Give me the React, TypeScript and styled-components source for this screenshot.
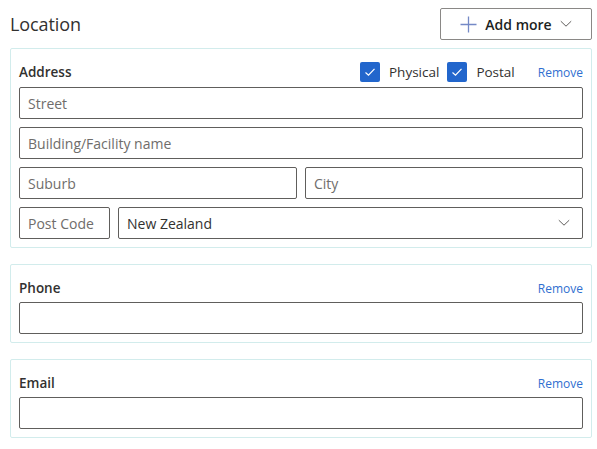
import React from 'react';
import styled, { createGlobalStyle } from 'styled-components';

const GlobalStyle = createGlobalStyle`
  html, body {
    margin: 0;
    padding: 0;
    background: #ffffff;
    font-family: "Open Sans", "Noto Sans", sans-serif;
    color: #323130;
  }
  * { box-sizing: border-box; }
`;

const Page = styled.div`
  width: 597px;
  padding: 8px 5px 0 10px;
  display: flex;
  flex-direction: column;
  gap: 16px;
`;

const TopBar = styled.div`
  display: flex;
  align-items: center;
  justify-content: space-between;
  height: 32px;
  margin-bottom: -8px;
`;

const Title = styled.h2`
  margin: 0;
  font-size: 18px;
  font-weight: 400;
  color: #323130;
  letter-spacing: -0.1px;
`;

const AddButton = styled.button`
  display: flex;
  align-items: center;
  justify-content: center;
  gap: 8px;
  width: 152px;
  height: 32px;
  padding: 0 12px;
  border: 1px solid #8a8886;
  border-radius: 2px;
  background: #ffffff;
  font-family: inherit;
  font-size: 14px;
  font-weight: 600;
  color: #201f1e;
  cursor: pointer;
`;

const Card = styled.section<{ $gap?: number }>`
  border: 1px solid #d2ecec;
  border-radius: 2px;
  padding: 13px 8px 8px 8px;
  display: flex;
  flex-direction: column;
  gap: ${({ $gap = 5 }) => $gap}px;
`;

const CardHeader = styled.div`
  display: flex;
  align-items: center;
  height: 20px;
`;

const Label = styled.span`
  font-size: 13.5px;
  font-weight: 600;
  color: #323130;
  flex: 1;
`;

const CheckGroup = styled.label`
  display: flex;
  align-items: center;
  gap: 9px;
  margin-right: 8px;
  font-size: 13.5px;
  color: #323130;
`;

const Box = styled.span`
  width: 20px;
  height: 20px;
  border-radius: 2px;
  background: #2266cc;
  display: flex;
  align-items: center;
  justify-content: center;
`;

const RemoveLink = styled.a`
  margin-left: 15px;
  font-size: 12px;
  color: #2f6fd0;
  text-decoration: none;
  cursor: pointer;
`;

const Fields = styled.div`
  display: flex;
  flex-direction: column;
  gap: 8px;
`;

const Row = styled.div<{ $cols: string }>`
  display: grid;
  grid-template-columns: ${({ $cols }) => $cols};
  gap: 8px;
`;

const TextInput = styled.input`
  width: 100%;
  height: 32px;
  padding: 0 8px;
  border: 1px solid #605e5c;
  border-radius: 2px;
  font-family: inherit;
  font-size: 14px;
  color: #323130;
  background: #ffffff;
  outline: none;

  &::placeholder {
    color: #6f6d6b;
  }
`;

const Select = styled.div`
  height: 32px;
  padding: 0 12px 0 8px;
  border: 1px solid #605e5c;
  border-radius: 2px;
  display: flex;
  align-items: center;
  justify-content: space-between;
  font-size: 14px;
  color: #323130;
`;

const Check = () => (
  <svg width="12" height="12" viewBox="0 0 12 12" fill="none">
    <path d="M1.5 6.5L4.5 9.2L10.5 2.8" stroke="#ffffff" strokeWidth="1.2" />
  </svg>
);

const Chevron = ({ color = '#605e5c' }: { color?: string }) => (
  <svg width="12" height="8" viewBox="0 0 12 8" fill="none">
    <path d="M0.8 1.2L6 6.2L11.2 1.2" stroke={color} strokeWidth="1" />
  </svg>
);

const Plus = () => (
  <svg width="17" height="17" viewBox="0 0 17 17" fill="none">
    <path d="M8.5 0.5V16.5M0.5 8.5H16.5" stroke="#7489c6" strokeWidth="1.3" />
  </svg>
);

const SingleCard = ({ title }: { title: string }) => (
  <Card $gap={4}>
    <CardHeader>
      <Label>{title}</Label>
      <RemoveLink>Remove</RemoveLink>
    </CardHeader>
    <TextInput />
  </Card>
);

export default function App() {
  return (
    <>
      <GlobalStyle />
      <Page>
        <TopBar>
          <Title>Location</Title>
          <AddButton>
            <Plus />
            Add more
            <Chevron color="#605e5c" />
          </AddButton>
        </TopBar>

        <Card>
          <CardHeader>
            <Label>Address</Label>
            <CheckGroup>
              <Box><Check /></Box>
              Physical
            </CheckGroup>
            <CheckGroup>
              <Box><Check /></Box>
              Postal
            </CheckGroup>
            <RemoveLink>Remove</RemoveLink>
          </CardHeader>
          <Fields>
            <TextInput placeholder="Street" />
            <TextInput placeholder="Building/Facility name" />
            <Row $cols="1fr 1fr">
              <TextInput placeholder="Suburb" />
              <TextInput placeholder="City" />
            </Row>
            <Row $cols="91px 1fr">
              <TextInput placeholder="Post Code" />
              <Select>
                New Zealand
                <Chevron />
              </Select>
            </Row>
          </Fields>
        </Card>

        <SingleCard title="Phone" />
        <SingleCard title="Email" />
      </Page>
    </>
  );
}
